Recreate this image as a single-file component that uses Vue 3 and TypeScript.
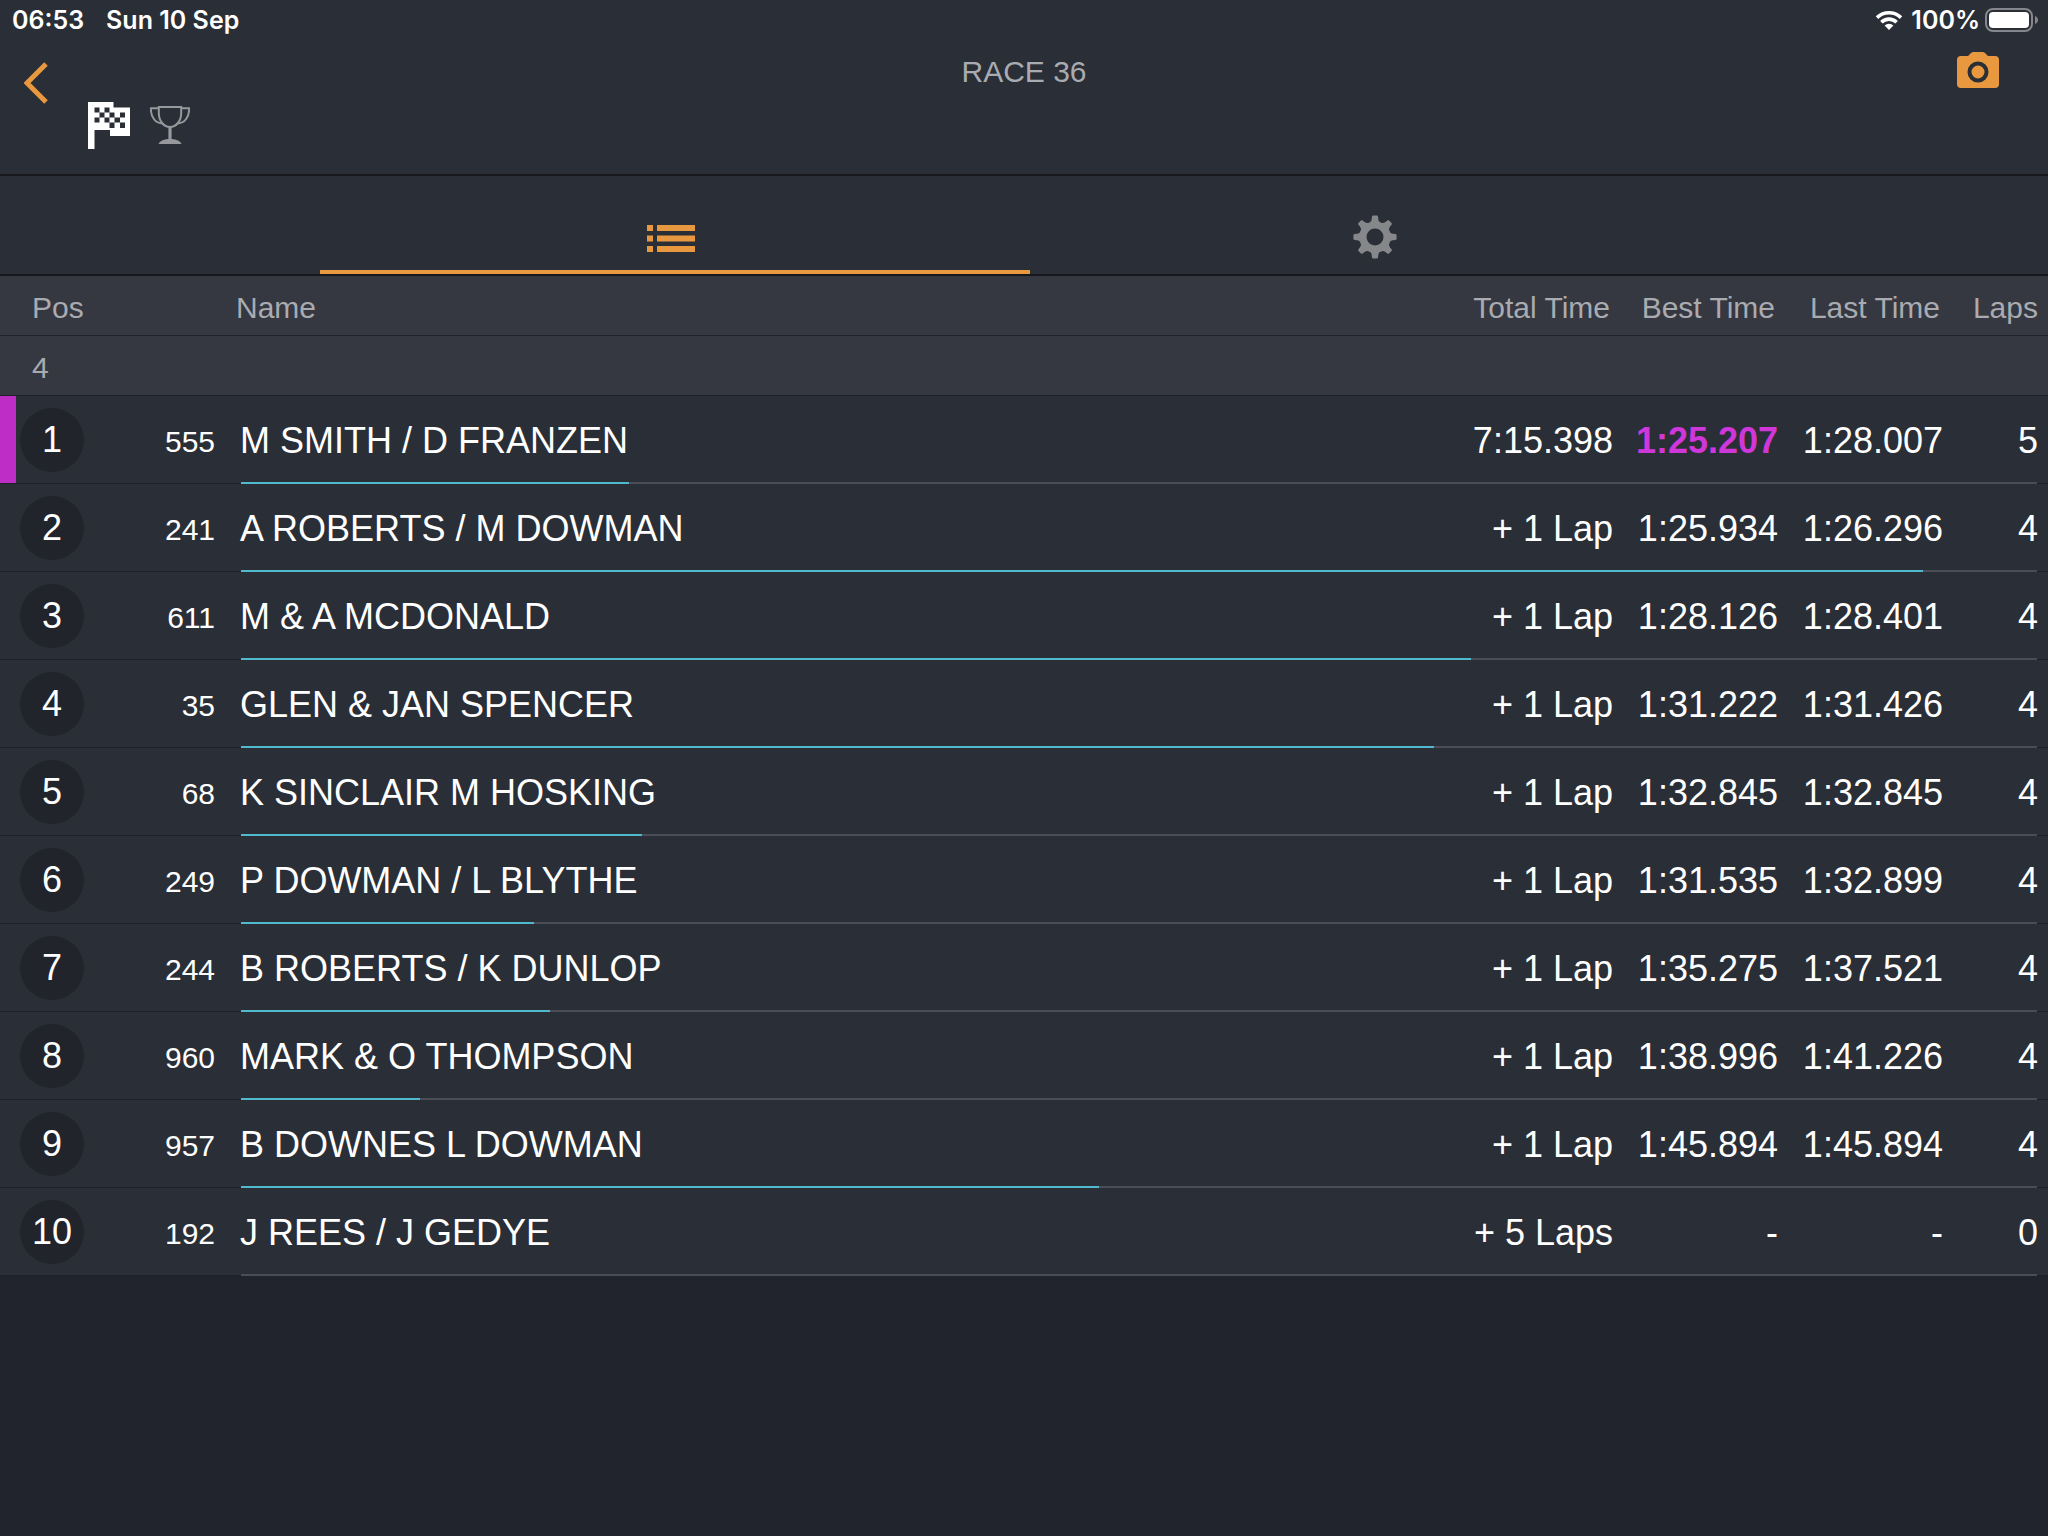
<script setup lang="ts">
import { ref } from 'vue'

interface Entry {
  pos: number
  kart: string
  name: string
  total: string
  best: string
  last: string
  laps: number
  progress: number
  fastest?: boolean
}

const activeTab = ref<'list' | 'settings'>('list')
const gearTeeth = [0, 45, 90, 135, 180, 225, 270, 315]

const entries: Entry[] = [
  { pos: 1, kart: '555', name: 'M SMITH / D FRANZEN', total: '7:15.398', best: '1:25.207', last: '1:28.007', laps: 5, progress: 21.6, fastest: true },
  { pos: 2, kart: '241', name: 'A ROBERTS / M DOWMAN', total: '+ 1 Lap', best: '1:25.934', last: '1:26.296', laps: 4, progress: 93.65 },
  { pos: 3, kart: '611', name: 'M & A MCDONALD', total: '+ 1 Lap', best: '1:28.126', last: '1:28.401', laps: 4, progress: 68.5 },
  { pos: 4, kart: '35', name: 'GLEN & JAN SPENCER', total: '+ 1 Lap', best: '1:31.222', last: '1:31.426', laps: 4, progress: 66.4 },
  { pos: 5, kart: '68', name: 'K SINCLAIR M HOSKING', total: '+ 1 Lap', best: '1:32.845', last: '1:32.845', laps: 4, progress: 22.3 },
  { pos: 6, kart: '249', name: 'P DOWMAN / L BLYTHE', total: '+ 1 Lap', best: '1:31.535', last: '1:32.899', laps: 4, progress: 16.3 },
  { pos: 7, kart: '244', name: 'B ROBERTS / K DUNLOP', total: '+ 1 Lap', best: '1:35.275', last: '1:37.521', laps: 4, progress: 17.2 },
  { pos: 8, kart: '960', name: 'MARK & O THOMPSON', total: '+ 1 Lap', best: '1:38.996', last: '1:41.226', laps: 4, progress: 9.95 },
  { pos: 9, kart: '957', name: 'B DOWNES L DOWMAN', total: '+ 1 Lap', best: '1:45.894', last: '1:45.894', laps: 4, progress: 47.8 },
  { pos: 10, kart: '192', name: 'J REES / J GEDYE', total: '+ 5 Laps', best: '-', last: '-', laps: 0, progress: 0 },
]
</script>

<template>
  <div class="app">
    <div class="status">
      <span class="clock">06:53</span>
      <span class="date">Sun 10 Sep</span>
      <svg class="wifi" width="28" height="20" viewBox="0 0 28 20" aria-hidden="true">
        <path d="M2 7.6a17.4 17.4 0 0 1 24 0" fill="none" stroke="#fff" stroke-width="3.6" />
        <path d="M6.4 12.2a11 11 0 0 1 15.2 0" fill="none" stroke="#fff" stroke-width="3.6" />
        <path d="M14 20l-4.4-4.5a6.3 6.3 0 0 1 8.8 0z" fill="#fff" />
      </svg>
      <span class="charge">100%</span>
      <svg class="battery" width="54" height="24" viewBox="0 0 54 24" aria-hidden="true">
        <rect x="1" y="1" width="46" height="22" rx="7" fill="none" stroke="#85878c" stroke-width="2" />
        <rect x="4" y="4" width="40" height="16" rx="4" fill="#fff" />
        <path d="M50 8c4 1.5 4 6.5 0 8z" fill="#85878c" />
      </svg>
    </div>

    <header class="nav">
      <div class="nav-left">
        <button class="back" type="button" aria-label="Back">
          <svg width="24" height="42" viewBox="0 0 24 42"><path d="M22 2L3 21l19 19" fill="none" stroke="#e8983e" stroke-width="5" /></svg>
        </button>
        <div class="marks">
          <svg width="42" height="48" viewBox="0 0 42 48" aria-hidden="true">
            <path d="M0 0h25.500v5.500H42V34H22v-6H6.500v19H0z" fill="#fff" />
            <path d="M6.500 5.500h5v5h-5zM16.500 5.500h5v5h-5zM11.500 10.500h5v5h-5zM21.500 10.500h5v5h-5zM32 10.500h5v5h-5zM6.500 15.500h5v5h-5zM16.500 15.500h5v5h-5zM26.500 15.500H32v5h-5.500zM21.500 20.500h5V26h-5zM32 20.500h5V26h-5z" fill="#2a2e36" />
          </svg>
          <svg class="cup" width="40" height="38" viewBox="0 0 40 38" aria-hidden="true">
            <g fill="none" stroke="#97989c" stroke-width="2">
              <path d="M8.800 1h22.400v6c0 8-5 14-11.200 14S8.800 15 8.800 7z" />
              <path d="M8.800 2.200H.8C.8 10 4.500 17.500 13 17.500M31.200 2.200h8c0 7.800-3.700 15.300-12.200 15.300" />
            </g>
            <path d="M18.400 21h3.200v12c5 .4 8.500 1.800 10 5H8.400c1.500-3.200 5-4.600 10-5z" fill="#97989c" />
          </svg>
        </div>
      </div>
      <h1 class="title">RACE 36</h1>
      <button class="camera" type="button" aria-label="Take photo">
        <svg width="42" height="36" viewBox="0 0 42 36">
          <path d="M4 4h7l3-3q1-1 2.500-1h9q1.500 0 2.500 1l3 3h7q4 0 4 4v24q0 4-4 4H4q-4 0-4-4V8q0-4 4-4z" fill="#e8983e" />
          <circle cx="21" cy="20" r="8.500" fill="none" stroke="#2a2e36" stroke-width="4" />
        </svg>
      </button>
    </header>

    <div class="tabs" role="tablist">
      <button class="tab" :class="{ active: activeTab === 'list' }" type="button" role="tab" :aria-selected="activeTab === 'list'" aria-label="Results" @click="activeTab = 'list'">
        <svg width="48" height="32" viewBox="0 -4 48 32" fill="#e8983e">
          <path d="M0 0h6v6H0zM10 0h38v6H10zM0 10.500h6v6H0zM10 10.500h38v6H10zM0 21h6v6H0zM10 21h38v6H10z" />
        </svg>
      </button>
      <button class="tab" :class="{ active: activeTab === 'settings' }" type="button" role="tab" :aria-selected="activeTab === 'settings'" aria-label="Settings" @click="activeTab = 'settings'">
        <svg width="44" height="44" viewBox="-22 -22 44 44">
          <circle r="12" fill="none" stroke="#85878a" stroke-width="7" />
          <path v-for="a in gearTeeth" :key="a" d="M-6.500-14Q-3.500-15-3.300-18L-3-20.500Q-2.800-21.600-1.800-21.600H1.800Q2.800-21.600 3-20.500L3.300-18Q3.500-15 6.500-14z" fill="#85878a" :transform="`rotate(${a})`" />
        </svg>
      </button>
    </div>

    <table class="results">
      <colgroup>
        <col class="c-pos" /><col class="c-kart" /><col /><col class="c-total" /><col class="c-time" /><col class="c-time" /><col class="c-laps" />
      </colgroup>
      <thead>
        <tr>
          <th class="pos-head" scope="col" colspan="2">Pos</th>
          <th class="name" scope="col">Name</th>
          <th scope="col">Total Time</th>
          <th scope="col">Best Time</th>
          <th scope="col">Last Time</th>
          <th class="laps" scope="col">Laps</th>
        </tr>
        <tr>
          <th class="pos-head" scope="rowgroup" colspan="7">4</th>
        </tr>
      </thead>
      <tbody>
        <tr v-for="e in entries" :key="e.pos" :class="{ fastest: e.fastest }">
          <td class="pos"><span class="badge">{{ e.pos }}</span></td>
          <td class="kart">{{ e.kart }}</td>
          <td class="name">
            {{ e.name }}
            <span class="track"><span class="fill" :style="{ width: e.progress + '%' }"></span></span>
          </td>
          <td>{{ e.total }}</td>
          <td class="best">{{ e.best }}</td>
          <td>{{ e.last }}</td>
          <td class="laps">{{ e.laps }}</td>
        </tr>
      </tbody>
    </table>
  </div>
</template>

<style>
body {
  margin: 0;
  background: #21242c;
}
</style>

<style scoped>
.app {
  min-height: 100vh;
  background: #21242c;
  color: #fff;
  font-family: "Liberation Sans", Arial, sans-serif;
}
button {
  margin: 0;
  padding: 0;
  border: 0;
  background: none;
  cursor: pointer;
}
svg {
  display: block;
  flex: none;
}
.status {
  display: flex;
  align-items: center;
  height: 40px;
  padding: 0 9px 0 12px;
  background: #2a2e36;
  font: 600 25px/40px Inter, sans-serif;
}
.date {
  margin-left: 22px;
}
.wifi {
  margin-left: auto;
}
.charge {
  margin: 0 5px 0 8px;
}
.nav {
  display: grid;
  grid-template-columns: 1fr auto 1fr;
  align-items: start;
  height: 134px;
  border-bottom: 2px solid #16181e;
  background: #2a2e36;
}
.nav-left {
  display: flex;
  align-items: flex-start;
}
.back {
  padding: 22px 24px;
}
.marks {
  display: flex;
  align-items: flex-start;
  gap: 20px;
  padding: 62px 0 0 16px;
}
.cup {
  margin-top: 4px;
}
.title {
  margin: 14px 0 0;
  color: #a9abb0;
  font-size: 30px;
  font-weight: 400;
  line-height: 36px;
}
.camera {
  justify-self: end;
  padding: 12px 49px 12px 24px;
}
.tabs {
  display: flex;
  height: 98px;
  padding: 0 320px;
  border-bottom: 2px solid #16181e;
  background: #2a2e36;
}
.tab {
  position: relative;
  display: flex;
  flex: 1;
  align-items: center;
  justify-content: center;
  padding: 24px 2px 0 0;
}
.tab.active::after {
  position: absolute;
  right: -6px;
  bottom: 0;
  left: 0;
  height: 4px;
  background: #e8983e;
  content: "";
}
.results {
  width: 100%;
  border-collapse: separate;
  border-spacing: 0;
  table-layout: fixed;
  text-align: right;
  white-space: nowrap;
}
.c-pos { width: 104px; }
.c-kart { width: 112px; }
.c-total { width: 200px; }
.c-time { width: 165px; }
.c-laps { width: 104px; }
th {
  height: 54px;
  padding: 5px 4px 0 0;
  border-bottom: 1px solid #1f2229;
  background: #353840;
  color: #a9abb0;
  font-size: 30px;
  font-weight: 400;
  line-height: 54px;
}
th.pos-head {
  padding-left: 32px;
  text-align: left;
}
th.name {
  padding-left: 20px;
  text-align: left;
}
th.laps {
  padding-right: 10px;
}
tbody tr {
  position: relative;
}
td {
  height: 85px;
  padding: 2px 1px 0 0;
  border-bottom: 1px solid #1f2229;
  background: #2a2e36;
  font-size: 36px;
  line-height: 85px;
  vertical-align: middle;
}
td.pos {
  height: 87px;
  padding: 0 0 0 20px;
  text-align: left;
}
.badge {
  display: block;
  width: 64px;
  border-radius: 32px;
  background: #22242c;
  line-height: 64px;
  text-align: center;
}
td.kart {
  height: 83px;
  padding-top: 4px;
  font-size: 30px;
  line-height: 83px;
}
td.name {
  padding-left: 24px;
  text-align: left;
}
td.laps {
  padding-right: 10px;
}
.fastest .pos {
  box-shadow: inset 16px 0 #bf2dc7;
}
.fastest .best {
  color: #cf37da;
  font-weight: 700;
}
.track {
  position: absolute;
  right: 11px;
  bottom: 0;
  left: 241px;
  height: 2px;
  background: #4a4d55;
}
.fill {
  display: block;
  height: 2px;
  background: #50b9cd;
}
</style>
